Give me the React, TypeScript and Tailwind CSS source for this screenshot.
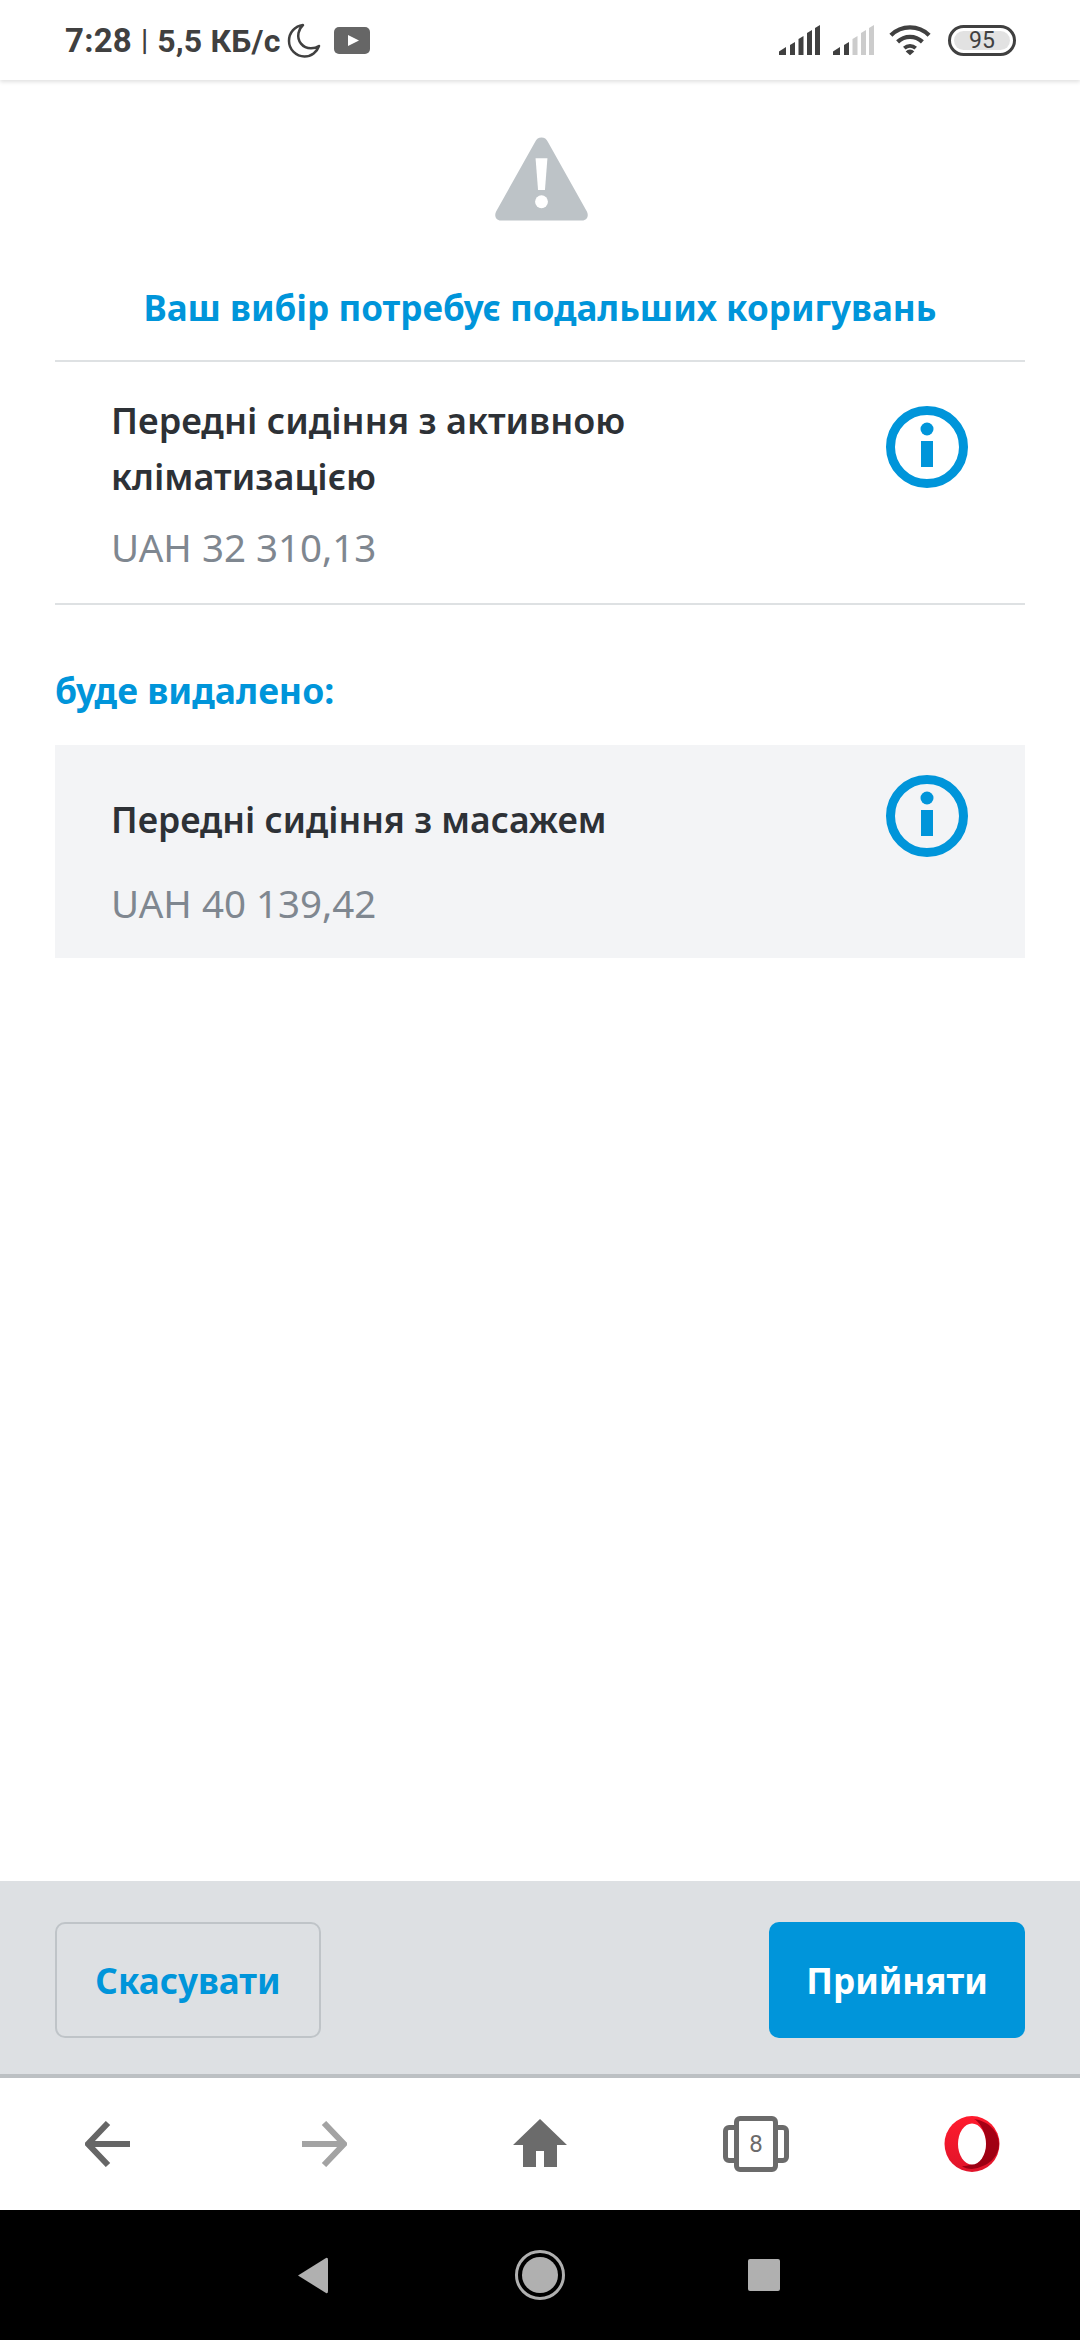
const font = "[font-family:'Noto_Sans',sans-serif]";

function InfoIcon() {
  return (
    <svg width="84" height="84" viewBox="0 0 84 84" className="shrink-0">
      <circle cx="42" cy="42" r="36.5" fill="none" stroke="#0095da" strokeWidth="9" />
      <circle cx="42" cy="24" r="6.5" fill="#0095da" />
      <rect x="36" y="36" width="12" height="26" fill="#0095da" />
    </svg>
  );
}

function Signal({ dim }: { dim?: boolean }) {
  const off = dim ? "#cccccc" : "#404040";
  return (
    <svg width="41" height="30" viewBox="0 0 41 30">
      <path d="M0 30v-3.500l7-4.500v8z" fill="#404040" />
      <path d="M11 30V20l5-3v13z" fill="#404040" />
      <path d="M19.500 30V14l5-3v19z" fill={off} />
      <path d="M28 30V8l5-3v25z" fill={off} />
      <path d="M36 30V3l5-3v30z" fill={off} />
    </svg>
  );
}

function StatusBar() {
  return (
    <div className="h-20 shrink-0 relative z-10 flex items-center justify-between pl-[65px] pr-[64px] bg-white shadow-[0_2px_4px_rgba(0,0,0,0.12)]">
      <div className="flex items-center font-['Roboto',sans-serif] font-bold text-[#404040] mt-[1px]">
        <span className="text-[33px] leading-none tracking-[0.2px]">7:28</span>
        <span className="text-[29px] leading-none font-medium mx-[9px]">|</span>
        <span className="text-[32px] leading-none tracking-[0.2px]">5,5 КБ/с</span>
        <svg width="34" height="36" viewBox="0 0 34 36" className="ml-[6px]">
          <path
            d="M16 2C8 3 2 9.500 2 18c0 8.500 7 15.500 15.500 15.500C24.500 33.500 30 29 32 23c-2 1.500-5 2.300-8 2.300C15.500 25.300 10 18 11.500 10c.6-3 2.300-6 4.500-8z"
            fill="none"
            stroke="#404040"
            strokeWidth="2.500"
            strokeLinejoin="round"
          />
        </svg>
        <svg width="36" height="28" viewBox="0 0 36 28" className="ml-[13px]">
          <rect width="36" height="27" rx="5" fill="#666666" />
          <path d="M14 8l11 5.500L14 19z" fill="#ffffff" />
        </svg>
      </div>
      <div className="flex items-center">
        <Signal />
        <div className="ml-[13px]">
          <Signal dim />
        </div>
        <svg width="42" height="32" viewBox="0 0 44 32" className="ml-[15px]">
          <path d="M2 11C13 0 31 0 42 11" fill="none" stroke="#404040" strokeWidth="4.500" />
          <path d="M9 18c7.500-7 18.500-7 26 0" fill="none" stroke="#404040" strokeWidth="4.500" />
          <path d="M16 24.500c3.500-3 8.500-3 12 0" fill="none" stroke="#404040" strokeWidth="4" />
          <path d="M22 32l-4.500-4a6 6 0 0 1 9 0z" fill="#404040" />
        </svg>
        <div className="ml-[17px] w-[68px] h-[31px] rounded-full border-[3px] border-[#404040] p-[3px]">
          <div className="w-full h-full rounded-full bg-[#e2e2e2] flex items-center justify-center font-['Roboto',sans-serif] text-[23px] leading-none text-[#404040]">
            95
          </div>
        </div>
      </div>
    </div>
  );
}

function Dialog() {
  return (
    <div className={`flex-1 bg-white px-[55px] ${font}`}>
      <div className="flex justify-center pt-[57px] pl-[2px]">
        <svg width="93" height="84" viewBox="0 0 94 84">
          <path
            d="M47 0c3 0 5 1.500 6.500 4.500L93 75c2 4.500 0 9-5 9H6c-5 0-7-4.500-5-9L40.500 4.500C42 1.500 44 0 47 0z"
            fill="#bdc3c7"
          />
          <path d="M41 21h12l-2.500 32h-7z" fill="#ffffff" />
          <circle cx="47" cy="65" r="6.500" fill="#ffffff" />
        </svg>
      </div>
      <h1 className="mt-[62px] text-center text-[35px] leading-[50px] font-bold text-[#0095da]">
        Ваш вибір потребує подальших коригувань
      </h1>
      <div className="mt-[27px] border-y-2 border-[#dee1e3] h-[245px] flex justify-between pl-[56px] pr-[56px] pt-[31px]">
        <div>
          <div className="text-[36px] leading-[56px] font-semibold text-[#2d3136]">
            Передні сидіння з активною
            <br />
            кліматизацією
          </div>
          <div className="mt-[17px] text-[38.500px] leading-[50px] text-[#7f8790]">UAH 32 310,13</div>
        </div>
        <div className="pt-[12px]">
          <InfoIcon />
        </div>
      </div>
      <h2 className="mt-[60px] text-[35.500px] leading-[50px] font-bold text-[#0095da]">буде видалено:</h2>
      <div className="mt-[30px] bg-[#f3f4f6] h-[213px] flex justify-between pl-[56px] pr-[56px] pt-[29px]">
        <div>
          <div className="text-[35.500px] leading-[56px] font-semibold text-[#2d3136] mt-[17px]">
            Передні сидіння з масажем
          </div>
          <div className="mt-[31px] text-[38.500px] leading-[50px] text-[#7f8790]">UAH 40 139,42</div>
        </div>
        <InfoIcon />
      </div>
    </div>
  );
}

function Footer() {
  return (
    <div className={`h-[197px] shrink-0 bg-[#dde0e3] px-[55px] pt-[41px] flex justify-between border-b-[4px] border-[#bcc0c3] ${font}`}>
      <button className="w-[266px] h-[116px] rounded-[10px] border-2 border-[#bfc4c8] pt-[3px] text-[35px] font-bold text-[#0095da]">
        Скасувати
      </button>
      <button className="w-[256px] h-[116px] rounded-[10px] bg-[#0095da] pt-[3px] text-[35px] font-bold text-white">
        Прийняти
      </button>
    </div>
  );
}

function BrowserNav() {
  return (
    <div className="h-[132px] shrink-0 bg-white grid grid-cols-5 items-center justify-items-center">
      <svg width="46" height="46" viewBox="0 0 46 46">
        <path d="M23 2L3 23l20 21M3 23h42" fill="none" stroke="#666666" strokeWidth="6" />
      </svg>
      <svg width="46" height="46" viewBox="0 0 46 46">
        <path d="M23 2l20 21-20 21M43 23H1" fill="none" stroke="#a3a3a3" strokeWidth="6" />
      </svg>
      <svg width="54" height="48" viewBox="0 0 54 48" className="mt-[-2px]">
        <path d="M27 0l27 26H44v22H31V32H23v16H10V26H0z" fill="#6b6b6b" />
      </svg>
      <div className="relative w-[66px] h-[56px] flex items-center justify-center">
        <div className="absolute left-0 top-[9px] w-full h-[38px] rounded-[6px] border-[5px] border-[#6b6b6b]" />
        <div className="relative w-[44px] h-[56px] rounded-[6px] border-[5px] border-[#6b6b6b] bg-white flex items-center justify-center font-['Roboto',sans-serif] text-[24px] leading-none text-[#6b6b6b]">
          8
        </div>
      </div>
      <svg width="56" height="56" viewBox="0 0 56 56">
        <defs>
          <linearGradient id="operaRed" x1="0" y1="0" x2="0" y2="1">
            <stop offset="0" stopColor="#ff1b2d" />
            <stop offset="1" stopColor="#e0142a" />
          </linearGradient>
          <linearGradient id="operaDark" x1="0" y1="0" x2="0" y2="1">
            <stop offset="0" stopColor="#a70014" />
            <stop offset="1" stopColor="#9c0012" />
          </linearGradient>
        </defs>
        <ellipse cx="28" cy="28" rx="27.500" ry="28" fill="url(#operaRed)" />
        <path d="M30 3c14 2 25 12 25 25S44 51 28 53c-4 0-8-1-10-3 12 0 24-8 24-22S34 5 30 3z" fill="url(#operaDark)" />
        <ellipse cx="28" cy="28" rx="14" ry="20.500" fill="#ffffff" />
      </svg>
    </div>
  );
}

function SystemNav() {
  return (
    <div className="h-[130px] shrink-0 bg-black flex items-center pl-[297px]">
      <svg width="32" height="37" viewBox="0 0 32 37">
        <path d="M1 18.500L29 1q2-1 2 2v31q0 3-2 2z" fill="#b0b0b0" />
      </svg>
      <div className="ml-[186px] w-[50px] h-[50px] rounded-full border-[3px] border-[#b0b0b0] p-[4px]">
        <div className="w-full h-full rounded-full bg-[#b0b0b0]" />
      </div>
      <div className="ml-[183px] w-[32px] h-[32px] rounded-[2px] bg-[#b0b0b0]" />
    </div>
  );
}

export default function App() {
  return (
    <div className="w-[1080px] h-[2340px] flex flex-col overflow-hidden bg-white">
      <StatusBar />
      <Dialog />
      <Footer />
      <BrowserNav />
      <SystemNav />
    </div>
  );
}
